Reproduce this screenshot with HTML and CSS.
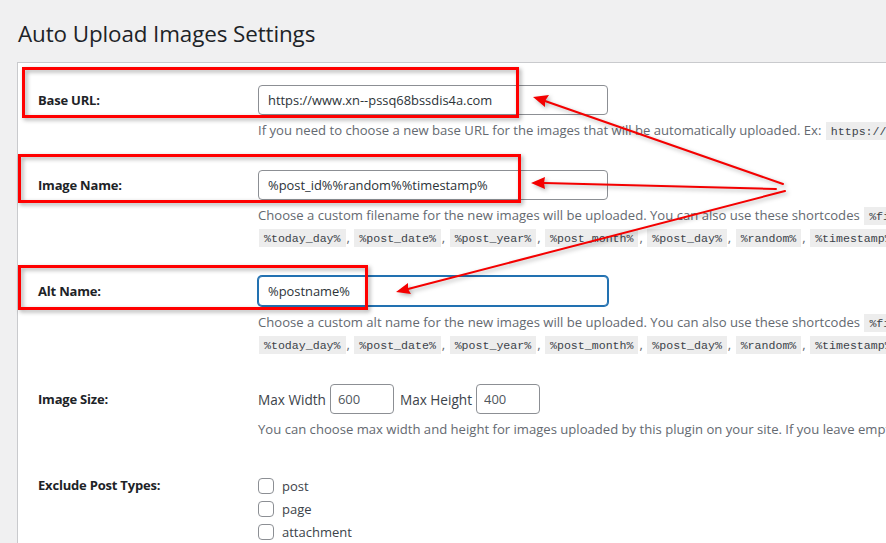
FILE: index.html
```html
<!DOCTYPE html>
<html lang="en">
<head>
<meta charset="utf-8">
<title>Auto Upload Images Settings</title>
<link rel="stylesheet" href="styles.css">
</head>
<body>
<div class="wrap">
  <h1 class="title">Auto Upload Images Settings</h1>
  <div class="panel">
    <div class="row row-base">
      <div class="label">Base URL:</div>
      <div class="field">
        <input class="text" type="text" value="https://www.xn--pssq68bssdis4a.com">
        <div class="desc">
          <div class="line">If you need to choose a new base URL for the images that will be automatically uploaded. Ex: <code>https://www.example.com/</code></div>
        </div>
      </div>
    </div>
    <div class="row row-name">
      <div class="label">Image Name:</div>
      <div class="field">
        <input class="text" type="text" value="%post_id%%random%%timestamp%">
        <div class="desc">
          <div class="line">Choose a custom filename for the new images will be uploaded. You can also use these shortcodes <code>%filename%</code>, <code>%image_title%</code>, <code>%url%</code>, <code>%today_date%</code>,</div>
          <div class="line"><code>%today_day%</code>, <code>%post_date%</code>, <code>%post_year%</code>, <code>%post_month%</code>, <code>%post_day%</code>, <code>%random%</code>, <code>%timestamp%</code>, <code>%postname%</code>.</div>
        </div>
      </div>
    </div>
    <div class="row row-alt">
      <div class="label">Alt Name:</div>
      <div class="field">
        <input class="text focus" type="text" value="%postname%">
        <div class="desc desc-alt">
          <div class="line">Choose a custom alt name for the new images will be uploaded. You can also use these shortcodes <code>%filename%</code>, <code>%image_title%</code>, <code>%url%</code>, <code>%today_date%</code>,</div>
          <div class="line"><code>%today_day%</code>, <code>%post_date%</code>, <code>%post_year%</code>, <code>%post_month%</code>, <code>%post_day%</code>, <code>%random%</code>, <code>%timestamp%</code>, <code>%postname%</code>.</div>
        </div>
      </div>
    </div>
    <div class="row row-size">
      <div class="label">Image Size:</div>
      <div class="field">
        <div class="size">
          <span class="size-label">Max Width</span>
          <input class="small" type="text" value="600">
          <span class="size-label">Max Height</span>
          <input class="small" type="text" value="400">
        </div>
        <div class="desc">
          <div class="line">You can choose max width and height for images uploaded by this plugin on your site. If you leave empty, the images will not be resized.</div>
        </div>
      </div>
    </div>
    <div class="row row-types">
      <div class="label label-types">Exclude Post Types:</div>
      <div class="field">
        <label class="check"><input type="checkbox" class="box"><span>post</span></label>
        <label class="check"><input type="checkbox" class="box"><span>page</span></label>
        <label class="check"><input type="checkbox" class="box"><span>attachment</span></label>
      </div>
    </div>
  </div>

  <div class="mark mark-1"></div>
  <div class="mark mark-2"></div>
  <div class="mark mark-3"></div>

  <svg class="arrows" width="886" height="543" viewBox="0 0 886 543" xmlns="http://www.w3.org/2000/svg">
    <g stroke="#f40000" stroke-width="2" fill="none" stroke-linecap="round">
      <line x1="783" y1="184" x2="545" y2="101"/>
      <line x1="776" y1="189" x2="544" y2="183"/>
      <line x1="785" y1="191" x2="408" y2="289"/>
    </g>
    <g fill="#f40000">
      <polygon points="533,97 549,95 545,101 545,107"/>
      <polygon points="531,183 545,177 544,183 545,189"/>
      <polygon points="396,292 408,283 408,289 411,294"/>
    </g>
  </svg>
</div>
</body>
</html>
```

FILE: styles.css
```css
html, body {
  margin: 0;
  padding: 0;
}
body {
  background: #f0f0f1;
  overflow: hidden;
  width: 886px;
  height: 543px;
  font-family: "Open Sans", "Noto Sans", sans-serif;
  color: #3c434a;
  font-size: 13px;
}
.wrap {
  position: relative;
  width: 886px;
  height: 543px;
  padding: 0 0 0 17px;
  box-sizing: border-box;
  overflow: hidden;
}
.title {
  margin: 0;
  padding: 19px 0 0 1px;
  height: 62px;
  box-sizing: border-box;
  font-size: 22.4px;
  font-weight: 400;
  line-height: 30px;
  color: #1d2327;
  letter-spacing: -0.1px;
}
.panel {
  width: 1200px;
  height: 600px;
  background: #fff;
  border: 1px solid #c9cacd;
  box-sizing: border-box;
  padding: 0 20px;
}
.row {
  display: grid;
  grid-template-columns: 220px 1fr;
}
.row-base { padding-top: 22px; }
.row-name { padding-top: 29px; }
.row-alt { padding-top: 28px; }
.row-size { padding-top: 29px; }
.row-types { padding-top: 34px; }
.label {
  font-weight: 700;
  font-size: 13px;
  color: #1d2327;
  line-height: 30px;
  letter-spacing: -0.2px;
}
.label-types {
  line-height: 23px;
}
.field {
  min-width: 0;
}
.text {
  display: block;
  width: 350px;
  height: 30px;
  box-sizing: border-box;
  margin: 0;
  padding: 0 9px;
  border: 1px solid #8c8f94;
  border-radius: 4px;
  background: #fff;
  font-family: inherit;
  font-size: 12.9px;
  color: #2c3338;
  outline: none;
}
.text.focus {
  border-color: #2271b1;
  box-shadow: 0 0 0 1px #2271b1;
}
.desc {
  margin-top: 4px;
  color: #646970;
  font-size: 13.1px;
  line-height: 22px;
}
.desc-alt {
  margin-top: 5px;
}
.line {
  white-space: nowrap;
  height: 22px;
  overflow: visible;
}
code {
  font-family: "Liberation Mono", "DejaVu Sans Mono", monospace;
  font-size: 11.6px;
  line-height: 1;
  background: #ededed;
  color: #3c434a;
  padding: 3px 5px 2px;
  margin: 0 1px;
}
.size {
  display: flex;
  align-items: center;
  height: 30px;
  color: #3c434a;
  font-size: 13.6px;
}
.size-label {
  margin-right: 4px;
}
.small {
  width: 64px;
  height: 30px;
  box-sizing: border-box;
  margin: 0 6px 0 0;
  padding: 0 7px;
  border: 1px solid #8c8f94;
  border-radius: 4px;
  font-family: inherit;
  font-size: 13px;
  color: #50575e;
}
.check {
  display: flex;
  align-items: center;
  height: 23px;
  color: #3c434a;
  font-size: 13px;
}
.box {
  -webkit-appearance: none;
  appearance: none;
  width: 16px;
  height: 16px;
  margin: 0 8px 0 0;
  border: 1px solid #8c8f94;
  border-radius: 4px;
  background: #fff;
  box-sizing: border-box;
}
.mark {
  position: absolute;
  border: 3px solid #ff0000;
  box-sizing: border-box;
  filter: drop-shadow(2px 2px 2px rgba(0, 0, 0, 0.35));
}
.mark-1 { left: 22px; top: 67px; width: 497px; height: 51px; }
.mark-2 { left: 18px; top: 154px; width: 503px; height: 49px; }
.mark-3 { left: 18px; top: 265px; width: 350px; height: 45px; }
.arrows {
  position: absolute;
  left: 0;
  top: 0;
  filter: drop-shadow(2px 2px 2px rgba(0, 0, 0, 0.3));
}
```
